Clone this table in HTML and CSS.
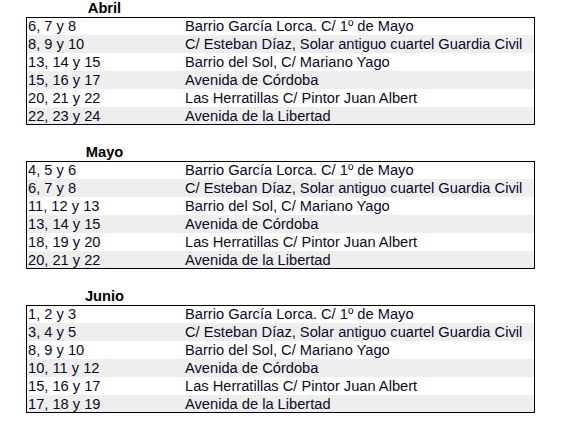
FILE: index.html
```html
<!DOCTYPE html>
<html lang="es">
<head>
<meta charset="utf-8">
<title>Calendario</title>
<link rel="stylesheet" href="styles.css">
</head>
<body>
<main class="sheet">
  <section class="month">
    <div class="title">Abril</div>
    <div class="table">
      <div class="row"><span class="days">6, 7 y 8</span><span class="place">Barrio García Lorca. C/ 1º de Mayo</span></div>
      <div class="row alt"><span class="days">8, 9 y 10</span><span class="place">C/ Esteban Díaz, Solar antiguo cuartel Guardia Civil</span></div>
      <div class="row"><span class="days">13, 14 y 15</span><span class="place">Barrio del Sol, C/ Mariano Yago</span></div>
      <div class="row alt"><span class="days">15, 16 y 17</span><span class="place">Avenida de Córdoba</span></div>
      <div class="row"><span class="days">20, 21 y 22</span><span class="place">Las Herratillas C/ Pintor Juan Albert</span></div>
      <div class="row alt"><span class="days">22, 23 y 24</span><span class="place">Avenida de la Libertad</span></div>
    </div>
  </section>
  <section class="month">
    <div class="title">Mayo</div>
    <div class="table">
      <div class="row"><span class="days">4, 5 y 6</span><span class="place">Barrio García Lorca. C/ 1º de Mayo</span></div>
      <div class="row alt"><span class="days">6, 7 y 8</span><span class="place">C/ Esteban Díaz, Solar antiguo cuartel Guardia Civil</span></div>
      <div class="row"><span class="days">11, 12 y 13</span><span class="place">Barrio del Sol, C/ Mariano Yago</span></div>
      <div class="row alt"><span class="days">13, 14 y 15</span><span class="place">Avenida de Córdoba</span></div>
      <div class="row"><span class="days">18, 19 y 20</span><span class="place">Las Herratillas C/ Pintor Juan Albert</span></div>
      <div class="row alt"><span class="days">20, 21 y 22</span><span class="place">Avenida de la Libertad</span></div>
    </div>
  </section>
  <section class="month">
    <div class="title">Junio</div>
    <div class="table">
      <div class="row"><span class="days">1, 2 y 3</span><span class="place">Barrio García Lorca. C/ 1º de Mayo</span></div>
      <div class="row alt"><span class="days">3, 4 y 5</span><span class="place">C/ Esteban Díaz, Solar antiguo cuartel Guardia Civil</span></div>
      <div class="row"><span class="days">8, 9 y 10</span><span class="place">Barrio del Sol, C/ Mariano Yago</span></div>
      <div class="row alt"><span class="days">10, 11 y 12</span><span class="place">Avenida de Córdoba</span></div>
      <div class="row"><span class="days">15, 16 y 17</span><span class="place">Las Herratillas C/ Pintor Juan Albert</span></div>
      <div class="row alt"><span class="days">17, 18 y 19</span><span class="place">Avenida de la Libertad</span></div>
    </div>
  </section>
</main>
</body>
</html>
```

FILE: styles.css
```css
html, body {
  margin: 0;
  padding: 0;
  background: #ffffff;
}

body {
  font-family: "Liberation Sans", Arial, sans-serif;
  font-size: 14.667px;
  line-height: 18px;
  color: #0a0a26;
}

.sheet {
  margin-top: -1px;
  padding-left: 26px;
  width: 509px;
}

.month {
  padding-bottom: 18px;
}

.title {
  height: 18px;
  width: 157px;
  text-align: center;
  font-weight: bold;
  color: #000000;
}

.table {
  outline: 1px solid #000000;
  outline-offset: -1px;
}

.row {
  display: flex;
  height: 18px;
  white-space: nowrap;
}

.row.alt {
  background: #eeeeee;
}

.days {
  width: 157px;
  padding-left: 2px;
  box-sizing: border-box;
  flex: none;
}

.place {
  padding-left: 2px;
}
```
